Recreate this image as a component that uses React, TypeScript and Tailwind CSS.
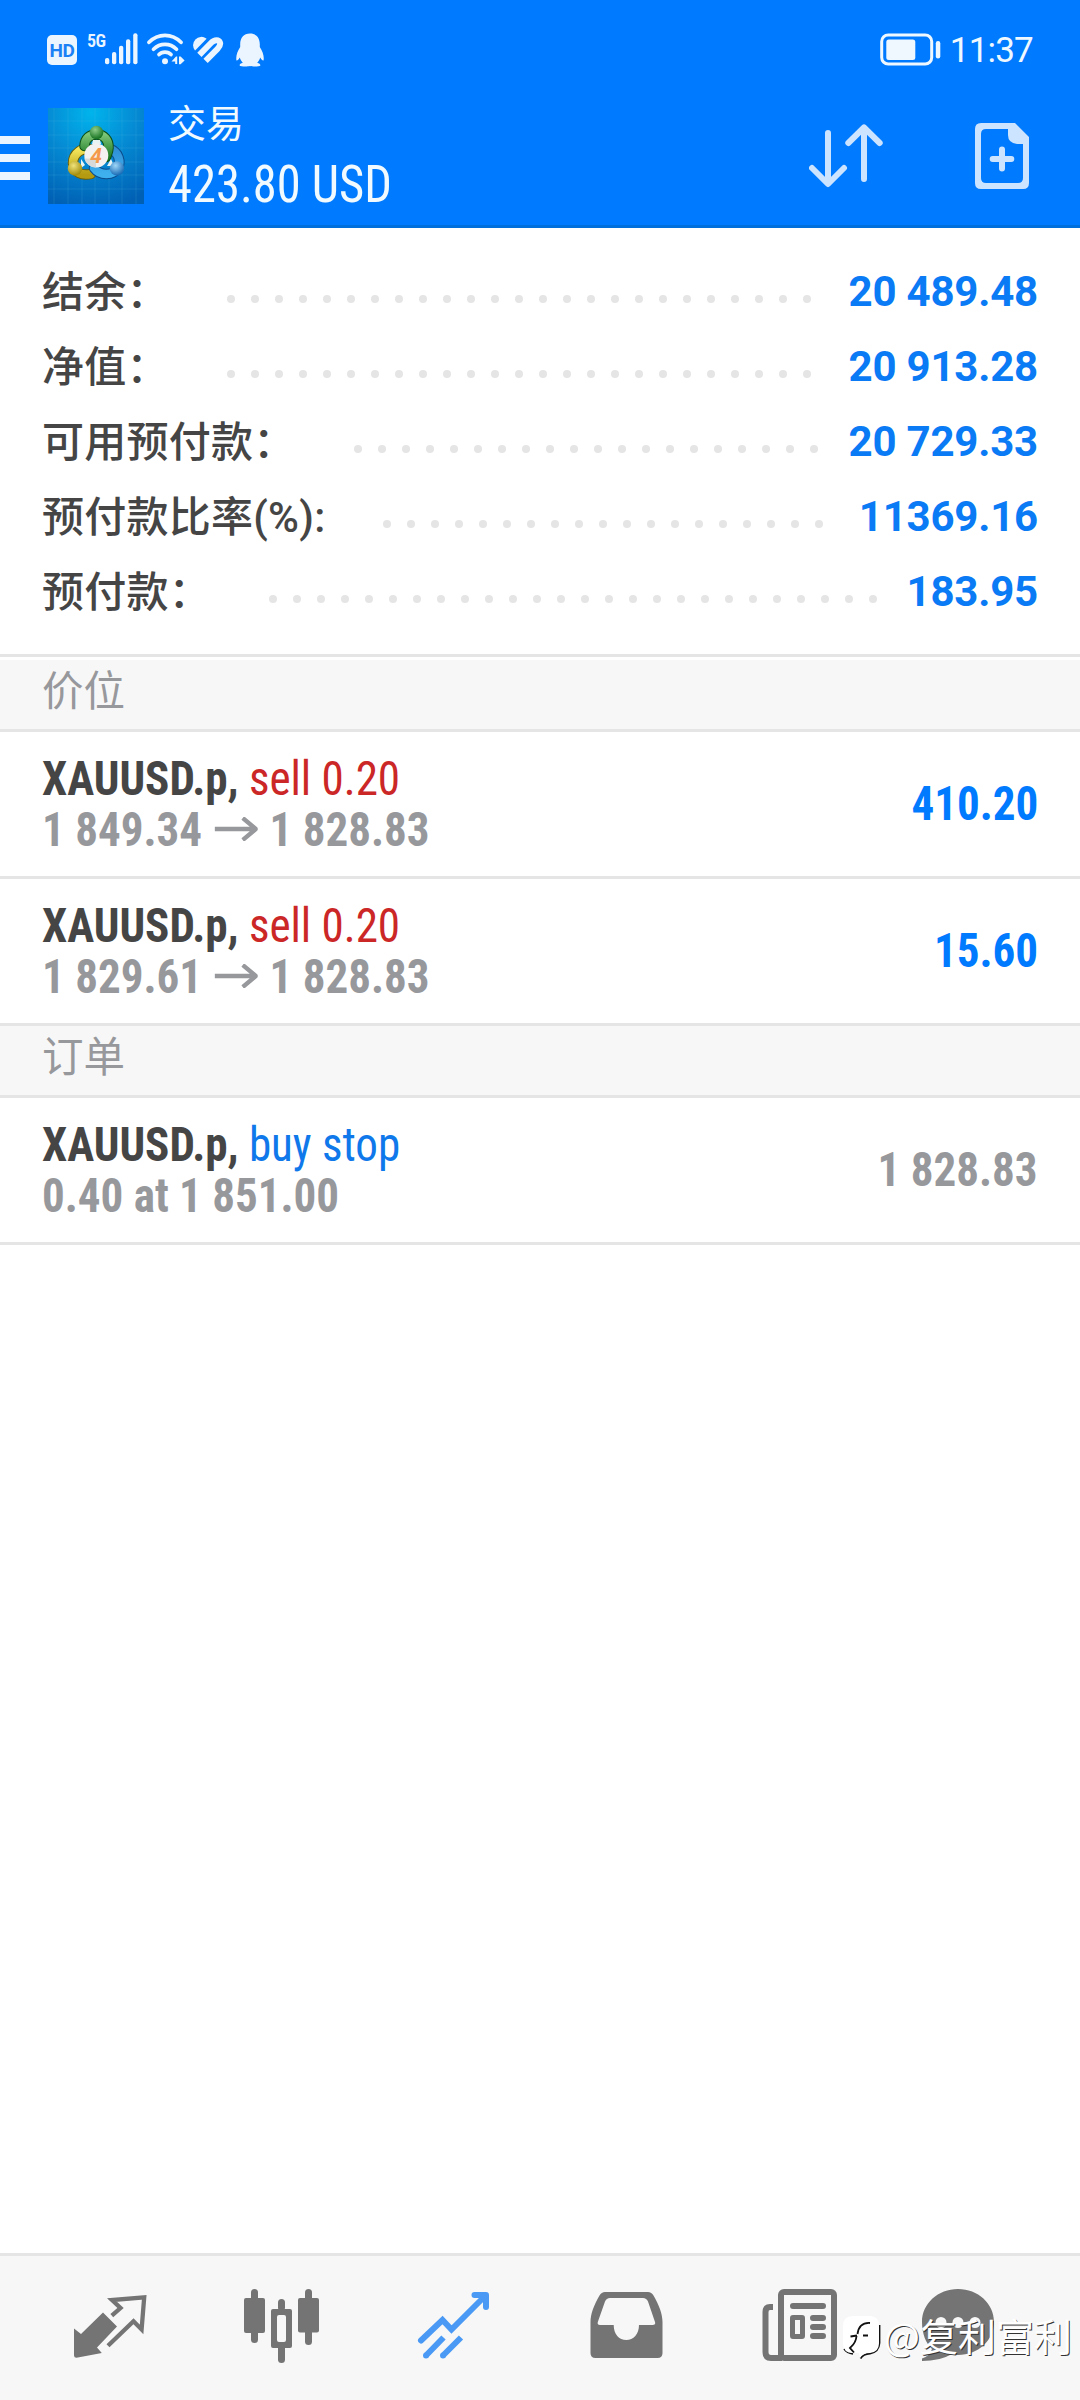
import type { ReactNode } from "react";

const summary = [
  { label: "结余：", value: "20 489.48", dots: 25 },
  { label: "净值：", value: "20 913.28", dots: 25 },
  { label: "可用预付款：", value: "20 729.33", dots: 20 },
  { label: "预付款比率(%):", value: "11369.16", dots: 19 },
  { label: "预付款：", value: "183.95", dots: 26 },
];

const positions = [
  { symbol: "XAUUSD.p", side: "sell 0.20", open: "1 849.34", current: "1 828.83", profit: "410.20" },
  { symbol: "XAUUSD.p", side: "sell 0.20", open: "1 829.61", current: "1 828.83", profit: "15.60" },
];

const StatusIcons = () => (
  <div className="flex items-start text-[#ebf5ff]">
    <div className="mt-[2px] flex size-[30px] items-center justify-center rounded-[5px] bg-[#ebf5ff] text-[19px] leading-none font-bold tracking-[-0.5px] text-[#1a80f5]">
      HD
    </div>
    <span className="mt-[-1px] ml-[10px] w-[18px] text-[18px] leading-[18px] font-semibold tracking-[-0.5px] font-stretch-condensed">5G</span>

    {/* Signal */}
    <svg width="33" height="32" viewBox="0 0 33 32" fill="currentColor">
      <rect x="0" y="25" width="4.3" height="6.3" rx="2" />
      <rect x="7" y="19" width="4.3" height="12.3" rx="2" />
      <rect x="14" y="12.7" width="4.3" height="18.6" rx="2" />
      <rect x="21" y="6.3" width="4.3" height="25" rx="2" />
      <rect x="28.2" y="0.3" width="4.3" height="31" rx="2" />
    </svg>

    {/* Wi-Fi */}
    <svg className="ml-[9px]" width="38" height="32" viewBox="0 0 38 32" fill="none" stroke="currentColor" strokeWidth="3.7" strokeLinecap="round">
      <path d="M2 9.3C11 0 25 0 34 9.3" />
      <path d="M6.5 16.2C13 9.8 23 9.8 29.5 16.2" />
      <path d="M12 21.6C15 18.3 21 18.3 24 21.6" />
      <circle cx="18" cy="28.2" r="3" fill="currentColor" stroke="none" />
      <path d="M24.5 28.6 29 23.4H30.2V31H28.2V28.6ZM32 23.4H33.6L37.6 27.4 33.6 31.3H32Z" fill="currentColor" stroke="none" />
    </svg>

    {/* Health heart */}
    <svg className="mt-[3px] ml-[7px]" width="32" height="28" viewBox="0 0 32 28" fill="none" stroke="currentColor" strokeWidth="6">
      <path d="M2.8 14.2A8.3 8.3 0 0 1 14.2 2.4L14.6 2.7 3.1 14.5Z" fill="currentColor" stroke="none" />
      <path d="M7.4 18.8 19.2 6.8C22.5 3.2 27 3.4 28 6.6 28.8 9.2 27.3 11 25.5 12.8L13.6 24.8" />
    </svg>

    {/* Penguin */}
    <svg className="ml-[12px]" width="28" height="34" viewBox="0 0 28 34" fill="currentColor">
      <path d="M14 0.5C7.6 0.5 4.2 5 4.2 11.2V14C1.5 18.2-0.3 23 0.4 27.2 0.8 28.2 2.4 27 3.8 24.6 4.3 26.6 5.3 28.4 6.8 29.8 4.8 30.4 3.6 31.3 3.6 32.4 4.6 33.8 12 33.6 14 33 16 33.6 23.4 33.8 24.4 32.4 24.4 31.3 23.2 30.4 21.2 29.8 22.7 28.4 23.7 26.6 24.2 24.6 25.6 27 27.2 28.2 27.6 27.2 28.3 23 26.5 18.2 23.8 14V11.2C23.8 5 20.4 0.5 14 0.5Z" />
    </svg>
  </div>
);

const AppLogo = () => (
  <svg width="96" height="96" viewBox="0 0 96 96">
    <defs>
      <radialGradient id="sky" cx="0.45" cy="0.05" r="1">
        <stop offset="0" stopColor="#00b4ec" />
        <stop offset="0.45" stopColor="#058cd4" />
        <stop offset="1" stopColor="#0060b4" />
      </radialGradient>
      <linearGradient id="green" x1="0" y1="0" x2="0" y2="1">
        <stop offset="0" stopColor="#7cc576" />
        <stop offset="1" stopColor="#1d7a25" />
      </linearGradient>
      <linearGradient id="yellow" x1="0" y1="0" x2="0" y2="1">
        <stop offset="0" stopColor="#f5e75c" />
        <stop offset="1" stopColor="#b39a10" />
      </linearGradient>
      <linearGradient id="blue" x1="0" y1="0" x2="0" y2="1">
        <stop offset="0" stopColor="#2f8fd6" />
        <stop offset="1" stopColor="#3fb0ee" />
      </linearGradient>
      <radialGradient id="greenHead" cx="0.4" cy="0.3" r="0.7">
        <stop offset="0" stopColor="#8fce8a" />
        <stop offset="1" stopColor="#14701e" />
      </radialGradient>
      <radialGradient id="yellowHead" cx="0.4" cy="0.3" r="0.7">
        <stop offset="0" stopColor="#efe27a" />
        <stop offset="1" stopColor="#a08a0a" />
      </radialGradient>
      <radialGradient id="blueHead" cx="0.4" cy="0.3" r="0.7">
        <stop offset="0" stopColor="#9fd6f8" />
        <stop offset="1" stopColor="#1569b4" />
      </radialGradient>
    </defs>
    <rect width="96" height="96" fill="url(#sky)" />
    <path
      d="M6 0V96M20 0V96M34 0V96M47 0V96M61 0V96M74 0V96M88 0V96M0 13H96M0 27H96M0 40H96M0 54H96M0 67H96M0 81H96"
      stroke="#5cc4f0"
      strokeOpacity="0.18"
    />
    <g fill="none" strokeLinecap="round">
      <path d="M44 42C34 38 25 46 25 55C26 65 34 68 43 66" stroke="#6b5d08" strokeWidth="10.5" />
      <path d="M44 42C34 38 25 46 25 55C26 65 34 68 43 66" stroke="url(#yellow)" strokeWidth="8.5" />
      <path d="M62 41C71 44 73 54 70 60C65 68 52 68 46 60" stroke="#0a4c8c" strokeWidth="10.5" />
      <path d="M62 41C71 44 73 54 70 60C65 68 52 68 46 60" stroke="url(#blue)" strokeWidth="8.5" />
      <path d="M36.5 38C37 30 42 26.5 48.5 26.5C56 26.5 61 32 60.5 40C60.3 44 59 46 58 49" stroke="#0c4f18" strokeWidth="10.5" />
      <path d="M36.5 38C37 30 42 26.5 48.5 26.5C56 26.5 61 32 60.5 40C60.3 44 59 46 58 49" stroke="url(#green)" strokeWidth="8.5" />
    </g>
    <path d="M45 32H52L53 36H44ZM33 51L37 57 33 60ZM63 51 66 58 59 58Z" fill="#e8f4f4" />
    <circle cx="48.5" cy="24.5" r="6.8" fill="url(#greenHead)" />
    <circle cx="27" cy="60.5" r="7.2" fill="url(#yellowHead)" />
    <circle cx="69" cy="60.5" r="7.2" fill="url(#blueHead)" />
    <circle cx="48.3" cy="47.5" r="12" fill="#f4f2f1" />
    <path d="M36.3 50.5H48V59.5A12 12 0 0 1 36.3 50.5Z" fill="#d9d9d9" />
    <text x="48" y="55" textAnchor="middle" fontSize="21" fontWeight="700" fontStyle="italic" fill="#f59a4c" className="font-['Roboto']">
      4
    </text>
  </svg>
);

const Header = () => (
  <header className="h-[228px] border-b-[3px] border-[#006fdc] bg-[#007aff]">
    <div className="flex h-[75px] justify-between pt-[33px] pr-[47px] pl-[47px]">
      <StatusIcons />
      <div className="flex items-start text-[#f0f8ff]">
        <svg width="61" height="33" viewBox="0 0 61 33" fill="none">
          <rect x="1.7" y="2" width="50" height="29" rx="6.5" stroke="currentColor" strokeWidth="3" />
          <rect x="6.3" y="6.5" width="29" height="20.5" rx="2.5" fill="currentColor" />
          <rect x="55.8" y="8" width="4.5" height="17.5" rx="2.2" fill="currentColor" />
        </svg>
        <span className="ml-[9px] text-[35px] leading-[35px] font-[450] tracking-[-0.8px]">11:37</span>
      </div>
    </div>

    <div className="flex">
      <div className="mt-[61px] flex w-[30px] flex-col gap-[10px]">
        <span className="h-2 bg-[#ebf5ff]" />
        <span className="h-2 bg-[#ebf5ff]" />
        <span className="h-2 bg-[#ebf5ff]" />
      </div>
      <div className="mt-[33px] ml-[18px]">
        <AppLogo />
      </div>
      <div className="mt-[22px] ml-[24px] text-[#f0faff]">
        <p className="font-['Noto_Sans_CJK_SC',sans-serif] text-[38px] leading-[48px]">交易</p>
        <p className="mt-[10px] origin-left scale-x-[0.952] text-[51px] leading-[60px] font-[450] whitespace-nowrap font-stretch-condensed">423.80 USD</p>
      </div>
      <div className="mt-[48px] mr-[51px] ml-auto flex gap-[92px] text-[#cce4ff]">
        <svg width="74" height="66" viewBox="0 0 74 66" fill="none" stroke="currentColor" strokeWidth="6" strokeLinecap="round" strokeLinejoin="round">
          <path d="M19 10V60M3 45 19 61 35 45" />
          <path d="M55 56V5M39.3 20 55 4.5 70.7 20" />
        </svg>
        <svg width="54" height="66" viewBox="0 0 54 66" fill="none">
          <path d="M6 0H40L54 14V60Q54 66 48 66H6Q0 66 0 60V6Q0 0 6 0ZM11 6Q6 6 6 11V55Q6 60 11 60H43Q48 60 48 55V21H42Q33 20 33 12V6Z" fill="currentColor" fillRule="evenodd" />
          <path d="M27 26.5V45.5M17.7 36H36.3" stroke="currentColor" strokeWidth="6" strokeLinecap="round" />
        </svg>
      </div>
    </div>
  </header>
);

const SummaryRow = ({ label, value, dots }: { label: string; value: string; dots: number }) => (
  <div className="flex h-[75px] items-start text-[42px] leading-[75px] whitespace-nowrap">
    <span className="pt-px font-medium tracking-[0.25px] text-[#454545]">{label}</span>
    <div className="mt-[41px] ml-[58px] flex gap-4">
      {Array.from({ length: dots }, (_, i) => (
        <span key={i} className="size-2 rounded-full bg-[#e5e5e5]" />
      ))}
    </div>
    <span className="ml-auto font-bold tracking-[-0.2px] text-[#0a7af5]">{value}</span>
  </div>
);

const SectionTitle = ({ children }: { children: ReactNode }) => (
  <h2 className="flex h-[72px] items-center border-b-[3px] border-[#e5e5e5] bg-[#f7f7f7] px-[42px] pb-[13px] font-['Noto_Sans_CJK_SC',sans-serif] text-[41.5px] leading-[56px] text-[#97989c]">
    {children}
  </h2>
);

const TradeRow = ({ title, detail, value }: { title: ReactNode; detail: ReactNode; value: ReactNode }) => (
  <div className="flex h-[147px] items-center justify-between border-b-[3px] border-[#e5e5e5] px-[42px] text-[48px] leading-[51px] whitespace-nowrap font-stretch-condensed">
    <div className="origin-left scale-x-[0.938]">
      <p className="font-[450] text-[#454545]">{title}</p>
      <p className="flex font-bold text-[#97989c]">{detail}</p>
    </div>
    <div className="origin-right scale-x-[0.938] pb-[2px] font-bold">{value}</div>
  </div>
);

const Arrow = () => (
  <svg className="mx-[13px] mt-[13px] shrink-0" width="46" height="24" viewBox="0 0 46 24" fill="none" stroke="currentColor" strokeWidth="4.5">
    <path d="M0 12H44M30 1 44 12 30 23" />
  </svg>
);

const TabBar = () => (
  <nav className="relative flex h-[147px] items-center border-t-[3px] border-[#e5e5e5] bg-[#f7f7f7] pl-6 text-[#747474]">
    {/* Quotes */}
    <div className="flex w-[172px] shrink-0 justify-center">
      <svg width="96" height="96" viewBox="0 0 96 96" fill="none">
        <path d="M12 48.5 19 54 41 32.5 55 46.5 35 67.5 39.8 73 14.5 77.7Q12 77.7 12 75.5Z" fill="currentColor" />
        <path d="M49.8 35.6 58.5 28 50 20 82.2 17.3 79.6 49.4 71.5 41.2 46 65.8" stroke="currentColor" strokeWidth="4.3" />
      </svg>
    </div>
    {/* Charts */}
    <div className="flex w-[172px] shrink-0 justify-center">
      <svg width="96" height="96" viewBox="0 0 96 96" fill="currentColor">
        <rect x="10" y="18" width="21" height="35" rx="2" />
        <rect x="17" y="9" width="7" height="54" rx="3.5" />
        <rect x="44" y="19" width="7" height="12" rx="3.5" />
        <rect x="44" y="64" width="7" height="19" rx="3.5" />
        <path d="M39 29H56Q58 29 58 31V66Q58 68 56 68H39Q37 68 37 66V31Q37 29 39 29ZM45 35Q43 35 43 37V60Q43 62 45 62H50Q52 62 52 60V37Q52 35 50 35Z" fillRule="evenodd" />
        <rect x="64" y="18" width="21" height="34.5" rx="2" />
        <rect x="71" y="9" width="7" height="56" rx="3.5" />
      </svg>
    </div>
    {/* Trade */}
    <div className="flex w-[172px] shrink-0 justify-center text-[#4a9af5]">
      <svg width="96" height="96" viewBox="0 0 96 96" fill="none" stroke="currentColor" strokeWidth="6">
        <path d="M15 60.5 36.5 40 45.5 49.5 79 16" strokeLinecap="round" />
        <path d="M68.5 15H80V27" strokeLinecap="round" strokeLinejoin="round" />
        <path d="M37.5 57.5 20 75.5M55 57.5 37 75.5" />
        <path d="M20 75.5H20.01M37 75.5H37.01" strokeLinecap="round" />
      </svg>
    </div>
    {/* History */}
    <div className="flex w-[172px] shrink-0 justify-center">
      <svg width="96" height="96" viewBox="0 0 96 96" fill="currentColor">
        <path d="M27 12H70Q73.5 12 75.5 15.5C81 25 84.5 34 84.5 42V73Q84.5 78 79.5 78H17.5Q12.5 78 12.5 73V42C12.5 34 16 25 21.5 15.5Q23.5 12 27 12ZM32 18Q28.5 18 27 21.5L19.8 42Q19 45 22 45H35.7C35.7 54 41 60 48.3 60C55.5 60 61 54 61 45H74.5Q78 45 77 42L70 21.5Q68.5 18 65 18Z" fillRule="evenodd" />
      </svg>
    </div>
    {/* News */}
    <div className="flex w-[172px] shrink-0 justify-center">
      <svg width="96" height="96" viewBox="0 0 96 96" fill="none" stroke="currentColor" strokeWidth="6">
        <rect x="31" y="12" width="53" height="66" rx="3" />
        <path d="M23 27H20Q15.5 27 15.5 32V72Q15.5 78 21 78H32" />
        <path d="M43 26H73M63 38H73M63 47H73M63 56H73" strokeLinecap="round" />
        <rect x="42.5" y="37.5" width="10" height="19" rx="0.5" strokeWidth="5" />
      </svg>
    </div>
    {/* Messages */}
    <div className="flex w-[172px] shrink-0 justify-center">
      <svg width="96" height="96" viewBox="12 0 96 96">
        <path d="M48 9C68 9 84 23.5 84 42S68 75 48 75Q44 75 41 74.5Q30 81 12 81V78.5Q20 76 22 69C15.5 63 12 53 12 42C12 23.5 28 9 48 9Z" fill="currentColor" />
        <circle cx="31" cy="42.5" r="5.5" fill="#f7f7f7" />
        <circle cx="48" cy="42.5" r="5.5" fill="#f7f7f7" />
        <circle cx="65" cy="42.5" r="5.5" fill="#f7f7f7" />
      </svg>
    </div>

    {/* Watermark */}
    <div className="absolute right-[8px] bottom-[39px] flex items-center text-white">
      <svg className="mt-[6px]" width="42" height="46" viewBox="0 0 42 46" fill="none">
        <path d="M37.5 10V28Q37 37 28 38.5Q21 39 18.5 43.5" stroke="#111" strokeWidth="1.8" />
        <path d="M2 34Q5 38 11 39" stroke="#111" strokeWidth="1.5" />
        <path d="M11 1H28Q37 1 37 11V28Q37 37 28 38Q21 38 18 43L17 38H11Q1 38 1 28V11Q1 1 11 1Z" fill="currentColor" />
        <path d="M28 8C20 7.5 16.5 12 15.5 19M8.5 21.5 15 20.5M21 20.5H26" stroke="#111" strokeWidth="1.8" />
        <path d="M14.5 21C14 28 11 30 8 33L12 37.5" stroke="#111" strokeWidth="1.8" />
      </svg>
      <span className="font-['Noto_Sans_CJK_SC',sans-serif] text-[38px] leading-[46px] [text-shadow:1px_1px_0_#333]">@复利富利</span>
    </div>
  </nav>
);

export default function App() {
  return (
    <div className="flex h-[2400px] w-[1080px] flex-col overflow-hidden bg-white font-['Roboto','Noto_Sans_CJK_SC',sans-serif]">
      <Header />

      <main className="flex-1">
        <section className="h-[426px] px-[42px] pt-[26px]">
          {summary.map((row) => (
            <SummaryRow key={row.label} {...row} />
          ))}
        </section>

        <div className="border-t-[3px] border-[#e5e5e5] pt-[3px]">
          <SectionTitle>价位</SectionTitle>
        </div>
        {positions.map((p) => (
          <TradeRow
            key={p.open}
            title={
              <>
                <b>{p.symbol},</b> <span className="text-[#cc2727]">{p.side}</span>
              </>
            }
            detail={
              <>
                {p.open}
                <Arrow />
                {p.current}
              </>
            }
            value={<span className="text-[#007aff]">{p.profit}</span>}
          />
        ))}

        <SectionTitle>订单</SectionTitle>
        <TradeRow
          title={
            <>
              <b>XAUUSD.p,</b> <span className="text-[#0f78ea]">buy stop</span>
            </>
          }
          detail="0.40 at 1 851.00"
          value={<span className="text-[#97989c]">1 828.83</span>}
        />
      </main>

      <TabBar />
    </div>
  );
}
